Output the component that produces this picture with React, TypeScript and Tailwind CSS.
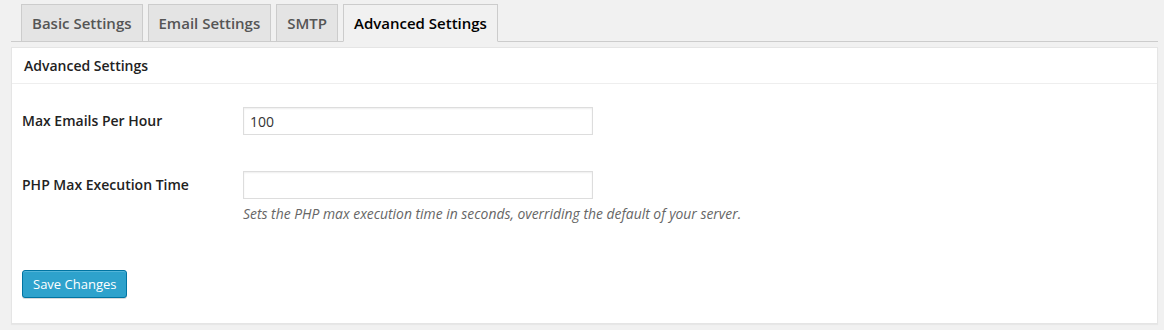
import React, { useState } from 'react';

const tabs = ['Basic Settings', 'Email Settings', 'SMTP', 'Advanced Settings'];

const App: React.FC = () => {
  const [active, setActive] = useState('Advanced Settings');
  const [maxEmails, setMaxEmails] = useState('100');
  const [execTime, setExecTime] = useState('');

  return (
    <div className="min-h-[330px] bg-[#f1f1f1] pt-[4px] font-['Open_Sans',sans-serif] text-[#444]">
      <div className="ml-[11px] mr-[6px]">
        {/* Tabs */}
        <div className="flex gap-[5px] border-b border-[#ccc] pl-[10px]">
          {tabs.map(tab => (
            <button
              key={tab}
              onClick={() => setActive(tab)}
              className={`-mb-px h-[38px] border border-[#ccc] px-[10px] text-[15px] font-semibold leading-[24px] ${
                active === tab
                  ? 'border-b-[#f1f1f1] bg-[#f1f1f1] text-[#000]'
                  : 'bg-[#e4e4e4] text-[#555]'
              }`}
            >
              {tab}
            </button>
          ))}
        </div>

        {/* Panel */}
        <div className="mt-[5px] border border-[#e5e5e5] bg-white shadow-[0_1px_1px_rgba(0,0,0,0.04)]">
          <div className="flex h-[36px] items-center border-b border-[#eee] px-[12px] text-[14px] font-semibold text-[#222]">
            Advanced Settings
          </div>

          <div className="px-[10px] pb-[25px] pt-[23px]">
            <div className="flex items-center">
              <label className="w-[221px] pb-[2px] text-[14px] font-semibold text-[#222]">Max Emails Per Hour</label>
              <input
                value={maxEmails}
                onChange={e => setMaxEmails(e.target.value)}
                className="h-[28px] w-[350px] border border-[#ddd] px-[6px] text-[14px] text-[#333] shadow-[inset_0_1px_2px_rgba(0,0,0,0.07)] outline-none"
              />
            </div>

            <div className="mt-[36px] flex items-center">
              <label className="w-[221px] pb-[2px] text-[14px] font-semibold text-[#222]">PHP Max Execution Time</label>
              <input
                value={execTime}
                onChange={e => setExecTime(e.target.value)}
                className="h-[28px] w-[350px] border border-[#ddd] px-[6px] text-[14px] text-[#333] shadow-[inset_0_1px_2px_rgba(0,0,0,0.07)] outline-none"
              />
            </div>
            <p className="ml-[221px] mt-[5px] text-[13.9px] italic leading-[20px] text-[#666]">
              Sets the PHP max execution time in seconds, overriding the default of your server.
            </p>

            <button className="mt-[46px] h-[28px] rounded-[3px] border border-[#0074a2] bg-[#2ea2cc] px-[10px] text-[13px] leading-[26px] text-white shadow-[inset_0_1px_0_rgba(120,200,230,0.5),0_1px_0_rgba(0,0,0,0.15)]">
              Save Changes
            </button>
          </div>
        </div>
      </div>
    </div>
  );
};

export default App;
